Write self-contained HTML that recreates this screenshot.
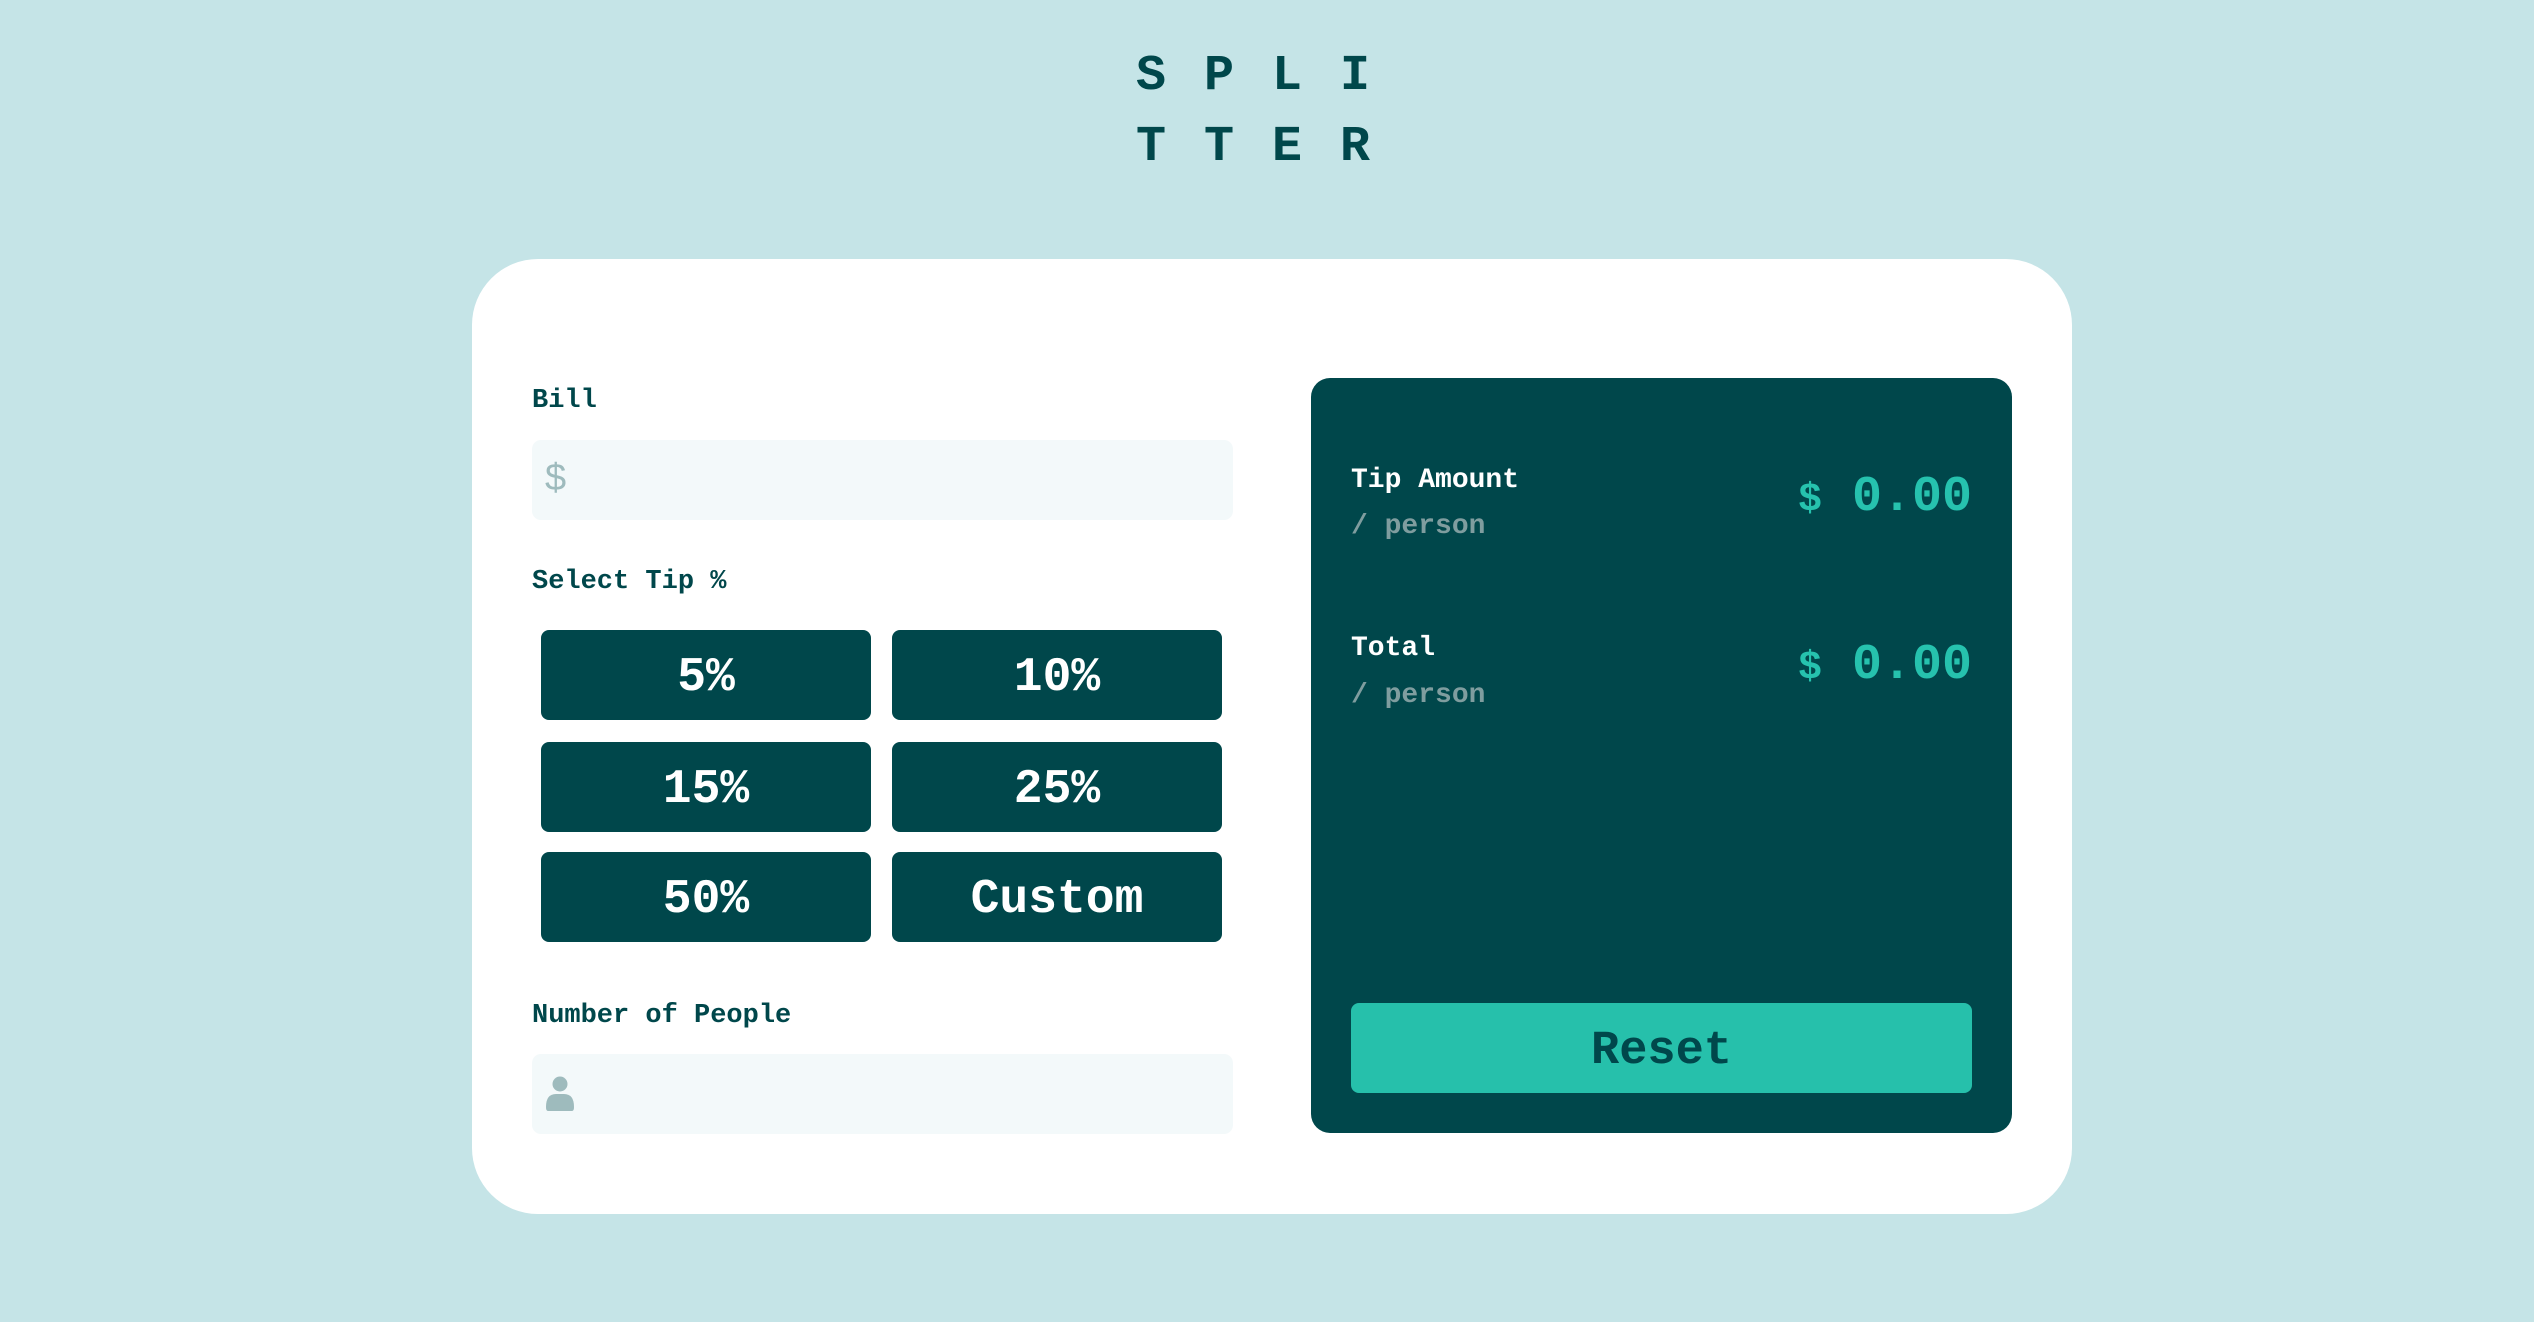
<!DOCTYPE html>
<html><head><meta charset="utf-8"><style>
*{margin:0;padding:0;box-sizing:border-box}
body{width:2534px;height:1322px;background:#c5e4e7;position:relative;overflow:hidden;font-family:"Liberation Mono",monospace;font-weight:bold}
.a{position:absolute;white-space:nowrap}
.logo span{position:absolute;font-size:50px;color:#00474b;line-height:50px;width:40px;text-align:center}
.card{position:absolute;left:472px;top:259px;width:1600px;height:955px;background:#fff;border-radius:66px}
.lbl{font-size:27px;color:#00474b;line-height:40px}
.inp{position:absolute;background:#f3f9fa;border-radius:9px;left:532px;width:701px;height:80px}
.btn{position:absolute;width:330px;height:90px;background:#00474b;border-radius:8px;color:#fff;font-size:48px;display:flex;align-items:center;justify-content:center;padding-top:6px}
.panel{position:absolute;left:1311px;top:378px;width:701px;height:755px;background:#00474b;border-radius:19px}
.w{font-size:28px;color:#fff;line-height:40px}
.g{font-size:28px;color:#7f9d9f;line-height:40px}
.amt{font-size:50px;color:#26c2ae;line-height:60px;text-align:right;right:562px}
.amt small{font-size:40px;margin-right:30px}
</style></head><body>
<div class="logo">
<span style="left:1131px;top:52px">S</span><span style="left:1199px;top:52px">P</span><span style="left:1267px;top:52px">L</span><span style="left:1335px;top:52px">I</span>
<span style="left:1131px;top:123px">T</span><span style="left:1199px;top:123px">T</span><span style="left:1267px;top:123px">E</span><span style="left:1335px;top:123px">R</span>
</div>
<div class="card"></div>
<div class="a lbl" style="left:532px;top:381px">Bill</div>
<div class="inp" style="top:440px"></div>
<div class="a" style="left:545px;top:453px;font-family:'Liberation Sans',sans-serif;font-weight:normal;font-size:38px;color:#9ebbbd;line-height:50px">$</div>
<div class="a lbl" style="left:532px;top:562px">Select Tip %</div>
<div class="btn" style="left:541px;top:630px">5%</div>
<div class="btn" style="left:892px;top:630px">10%</div>
<div class="btn" style="left:541px;top:742px">15%</div>
<div class="btn" style="left:892px;top:742px">25%</div>
<div class="btn" style="left:541px;top:852px">50%</div>
<div class="btn" style="left:892px;top:852px">Custom</div>
<div class="a lbl" style="left:532px;top:996px">Number of People</div>
<div class="inp" style="top:1054px"></div>
<svg class="a" style="left:546px;top:1075px" width="28" height="36" viewBox="0 0 28 36"><circle cx="14" cy="9" r="7.5" fill="#9ebbbd"/><path d="M2 36 Q0 36 0 32 Q0 19 10 19 L18 19 Q28 19 28 32 Q28 36 26 36 Z" fill="#9ebbbd"/></svg>
<div class="panel"></div>
<div class="a w" style="left:1351px;top:461px">Tip Amount</div>
<div class="a g" style="left:1351px;top:507px">/ person</div>
<div class="a amt" style="top:468px"><small>$</small>0.00</div>
<div class="a w" style="left:1351px;top:629px">Total</div>
<div class="a g" style="left:1351px;top:676px">/ person</div>
<div class="a amt" style="top:636px"><small>$</small>0.00</div>
<div class="a" style="left:1351px;top:1003px;width:621px;height:90px;background:#26c0ab;border-radius:8px;color:#00474b;font-size:47px;display:flex;align-items:center;justify-content:center;padding-top:6px">Reset</div>
</body></html>
